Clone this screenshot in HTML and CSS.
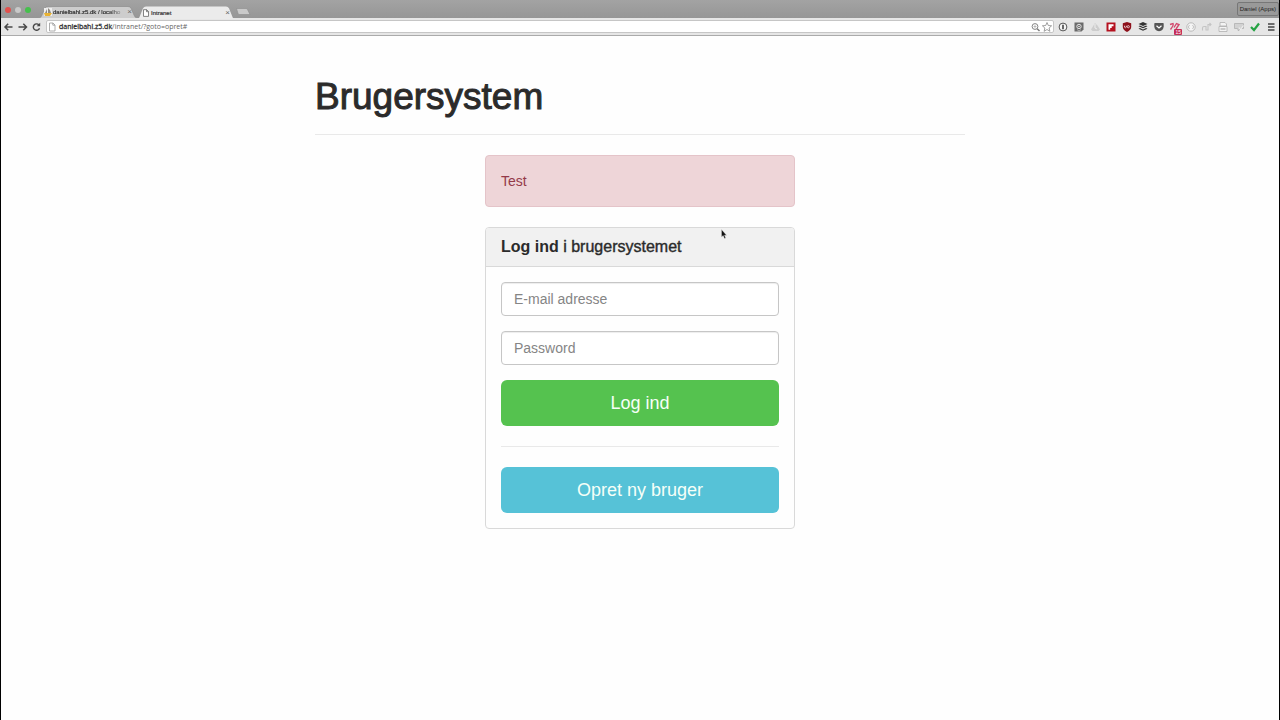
FILE: index.html
```html
<!DOCTYPE html>
<html lang="da">
<head>
  <meta charset="UTF-8">
  <meta name="viewport" content="width=device-width, initial-scale=1.0">
  <title>Intranet</title>
  <link rel="stylesheet" href="styles.css">
</head>
<body>
  <header class="browser">
    <div class="tabstrip">
      <div class="lights"><span class="light red"></span><span class="light grey"></span><span class="light green"></span></div>
      <div class="tab">
        <svg class="tab-shape" viewBox="0 0 98 12" preserveAspectRatio="none"><path d="M0 12Q2 12 3 9L6 2Q7 .5 9 .5H89Q91 .5 92 2L95 9Q96 12 98 12" fill="#cdcdcd" stroke="#8d8d8d" stroke-width=".7"/></svg>
        <svg class="fav" viewBox="0 0 8 8"><path d="M0 0H8V8H0Z" fill="#eee"/><path d="M1 5L3 1V5ZM4 5V0Q7 2 7 5Z" fill="#8f8a80"/><path d="M0 5H8L6 8H1Z" fill="#e8b232"/></svg>
        <span class="tab-title fade">danielbahl.z5.dk / localho</span>
        <button class="close" aria-label="Luk fane">×</button>
      </div>
      <div class="tab active">
        <svg class="tab-shape" viewBox="0 0 98 12" preserveAspectRatio="none"><path d="M0 12Q2 12 3 9L6 2Q7 .5 9 .5H89Q91 .5 92 2L95 9Q96 12 98 12" fill="#ebebeb"/></svg>
        <svg class="fav" viewBox="0 0 8 8"><path d="M1.500 .7H4.700L6.500 2.500V7.400H1.500ZM4.500 .7V2.700H6.500" fill="#fff" stroke="#666" stroke-width=".8"/></svg>
        <span class="tab-title">Intranet</span>
        <button class="close" aria-label="Luk fane">×</button>
      </div>
      <svg class="newtab" viewBox="0 0 16 7"><path d="M1.500 .5H11Q12 .5 12.500 1.500L15 6.500H4.500Q3.500 6.500 3 5.500Z" fill="#c9c9c9" stroke="#8b8b8b" stroke-width=".6"/></svg>
      <button class="profile">Daniel (Apps)</button>
    </div>
    <div class="toolbar">
      <svg class="nav" viewBox="0 0 14 12"><path d="M11.500 6H4.500M7.200 2.800L4 6L7.200 9.200" fill="none" stroke="#484848" stroke-width="1.500"/></svg>
      <svg class="nav" viewBox="0 0 14 12"><path d="M3.500 6H11M8.300 2.800L11.500 6L8.300 9.200" fill="none" stroke="#484848" stroke-width="1.500"/></svg>
      <svg class="nav" viewBox="0 0 14 12"><path d="M10 4A3.200 3.200 0 1 0 10.500 7.200" fill="none" stroke="#484848" stroke-width="1.400"/><path d="M11.200 1.800V5.300H7.700Z" fill="#484848"/></svg>
      <div class="omnibox">
        <svg class="page-icon" viewBox="0 0 10 12"><path d="M2.500 2H6L8 4V10H2.500ZM5.800 2V4.200H8" fill="#fff" stroke="#999" stroke-width=".8"/></svg>
        <span class="url"><b>danielbahl.z5.dk</b>/intranet/?goto=opret#</span>
        <svg class="inner" viewBox="0 0 12 12"><circle cx="6" cy="5.500" r="2.900" fill="none" stroke="#777" stroke-width=".9"/><path d="M4.500 5.500H7.500M6 4V7" stroke="#999" stroke-width=".6"/><path d="M8.200 7.700L10.500 10" stroke="#777" stroke-width="1.400"/></svg>
        <svg class="inner" viewBox="0 0 12 12"><path d="M6 1.500L7.300 4.500L10.600 4.800L8.100 7L8.900 10.300L6 8.500L3.100 10.300L3.900 7L1.400 4.800L4.700 4.500Z" fill="#fff" stroke="#888" stroke-width=".8"/></svg>
      </div>
      <div class="extensions">
        <svg viewBox="0 0 16 12"><circle cx="8" cy="6" r="3.900" fill="#f6f6f6" stroke="#555" stroke-width="1"/><path d="M8 3.800V8.200" stroke="#444" stroke-width="1.600"/></svg>
        <svg viewBox="0 0 16 12"><path d="M3.500 1.500H12.500V8.500L10.500 10.500H3.500Z" fill="#6b6b6b"/><circle cx="8" cy="5.500" r="2.200" fill="none" stroke="#eee" stroke-width=".9"/><circle cx="8" cy="5.500" r=".8" fill="#eee"/><path d="M6 8.500L8 10L10 8.500" fill="none" stroke="#ddd" stroke-width=".6"/></svg>
        <svg viewBox="0 0 16 12"><path d="M8 2L4 8.500L5.500 10H11.500L13 8.500L10.500 4.500Z" fill="#cdcdcd"/><path d="M8 3V7L10 8" fill="none" stroke="#eee" stroke-width="1"/></svg>
        <svg viewBox="0 0 16 12"><path d="M3.500 1.500H12.500V10.500H3.500Z" fill="#b51220"/><path d="M5.500 3.300H10.500V5.200H8.700V7H7.200V8.800H5.500Z" fill="#fff"/></svg>
        <svg viewBox="0 0 16 12"><path d="M8 1L12.200 2.300V6Q12 9 8 11Q4 9 3.800 6V2.300Z" fill="#8d101b"/><path d="M5.500 4.700V6.200Q6.400 7.300 7.300 6.200V4.700" fill="none" stroke="#fff" stroke-width=".7"/><circle cx="9.300" cy="5.700" r="1.100" fill="none" stroke="#fff" stroke-width=".7"/></svg>
        <svg viewBox="0 0 16 12"><path d="M8 1L12.500 3L8 5L3.500 3ZM3.500 5.200L5 4.600L8 6L11 4.600L12.500 5.200L8 7.300ZM3.500 7.700L5 7.100L8 8.500L11 7.100L12.500 7.700L8 9.800Z" fill="#333"/></svg>
        <svg viewBox="0 0 16 12"><path d="M4 2H12Q12.700 2 12.700 2.700V5.500Q12.500 9.700 8 10.300Q3.500 9.700 3.300 5.500V2.700Q3.300 2 4 2Z" fill="#555"/><path d="M5.500 4.700L8 7L10.500 4.700" fill="none" stroke="#fff" stroke-width="1.200"/></svg>
        <div class="badged">
          <svg viewBox="0 0 16 12"><path d="M3 3.500L6 2.500Q7 4 3.500 8.500M7 6.500L9.500 2.500L12 3.500L9 8" fill="none" stroke="#d3496d" stroke-width="1.400"/></svg>
          <span class="badge">15</span>
        </div>
        <svg viewBox="0 0 16 12"><circle cx="8" cy="6" r="4.200" fill="#f5f5f5" stroke="#b3b3b3" stroke-width=".9"/><path d="M6.500 4L5.300 6L6.500 8M9.500 4L10.700 6L9.500 8" fill="none" stroke="#bbb" stroke-width=".9"/></svg>
        <svg viewBox="0 0 16 12"><path d="M3.500 9.500V7Q3.500 5.500 5 5.500H7V9H9V3.500H12M10.500 2L12 3.500L10.500 5" fill="none" stroke="#c4c4c4" stroke-width="1.100"/></svg>
        <svg viewBox="0 0 16 12"><path d="M5 1.500H10L11.500 3V5H5ZM4 5.500H12V10.500H4Z" fill="#f4f4f4" stroke="#b0b0b0" stroke-width=".8"/><path d="M5.500 8H10.500" stroke="#aaa" stroke-width="1.200"/></svg>
        <svg viewBox="0 0 16 12"><path d="M3.500 2.500H12.500V7.500H9L7.500 10L6.500 7.500H3.500Z" fill="#d2d2d2" stroke="#b0b0b0" stroke-width=".8"/><path d="M8 6.500L9.500 8.500L12.500 4.500" fill="none" stroke="#eee" stroke-width="1.200"/></svg>
        <svg viewBox="0 0 16 12"><path d="M4 6L7 9L12 2.500" fill="none" stroke="#25a344" stroke-width="2.200"/></svg>
        <svg viewBox="0 0 16 12"><path d="M5 3H11.500M5 6H11.500M5 9H11.500" stroke="#444" stroke-width="1.500"/></svg>
      </div>
    </div>
  </header>

  <main class="container">
    <h1>Brugersystem</h1>
    <div class="login">
      <div class="alert">Test</div>
      <div class="panel">
        <h2 class="panel-heading"><b>Log ind</b> i brugersystemet</h2>
        <form class="panel-body">
          <input type="email" class="form-control" placeholder="E-mail adresse" aria-label="E-mail adresse">
          <input type="password" class="form-control" placeholder="Password" aria-label="Password">
          <button type="button" class="btn btn-success">Log ind</button>
          <hr>
          <button type="button" class="btn btn-info">Opret ny bruger</button>
        </form>
        <svg class="cursor" viewBox="0 0 6 10"><path d="M.5 .5V8L2.200 6.500L3.500 9.500L4.700 9L3.500 6.200H5.500Z" fill="#111" stroke="#ddd" stroke-width=".4"/></svg>
      </div>
    </div>
  </main>
</body>
</html>
```
FILE: styles.css
```css
* { box-sizing: border-box; }
body { margin: 0; min-height: 100vh; background: #fefefe; color: #2b2b2b;
       border: solid #000; border-width: 0 1px;
       font-family: "Liberation Sans", Arial, sans-serif; font-size: 14px; line-height: 20px; }
svg { display: block; flex: none; }
button { font-family: inherit; }

/* browser bar */
.browser { font-size: 7px; line-height: 10px; }
.tabstrip { display: flex; align-items: flex-end; height: 18px; padding-left: 4px;
            background: linear-gradient(#a3a3a3, #969696); }
.lights { display: flex; gap: 4px; width: 34px; height: 11px; }
.light { width: 6px; height: 6px; border-radius: 50%; }
.red { background: #e2504c; }
.grey { background: #c9c9c9; }
.green { background: #45c04c; }
.tab { position: relative; display: flex; align-items: center; width: 98px; height: 12px;
       padding: 0 5px; gap: 1px; color: #333; }
.tab.active { height: 13px; margin-bottom: -1px; }
.tab > * { position: relative; }
.tab .tab-shape { position: absolute; left: 0; top: 0; width: 100%; height: 100%; }
.fav { width: 8px; height: 8px; }
.tab-title { flex: 1; white-space: nowrap; font-size: 6px; -webkit-text-stroke: 0.2px #333; }
.fade { -webkit-mask-image: linear-gradient(90deg, #000 75%, transparent); }
.close { padding: 0; border: 0; background: none; color: #666; font-size: 8px; line-height: 8px; }
.newtab { width: 16px; height: 7px; margin-bottom: 3px; }
.profile { margin-left: auto; height: 14px; margin-bottom: 2px; padding: 0 2px; border: 1px solid #777;
           border-radius: 2px; background: #999; color: #222; font-size: 6px; line-height: 10px; }
.toolbar { display: flex; align-items: center; height: 18px;
           background: #e6e6e6; border-bottom: 1px solid #ababab; }
.nav { width: 14px; height: 12px; }
.omnibox { display: flex; align-items: center; flex: 1; height: 13px; margin-left: 3px; margin-right: 1px;
           background: #fff; border: 1px solid #c6c6c6; border-radius: 2px; }
.page-icon { width: 10px; height: 12px; margin-right: 2px; }
.url { flex: 1; color: #666; font-family: "Open Sans", sans-serif; }
.url b { color: #333; font-weight: normal; -webkit-text-stroke: 0.3px #333; }
.inner { width: 12px; height: 12px; }
.extensions { display: flex; }
.extensions svg { width: 16px; height: 12px; }
.badged { position: relative; }
.badge { position: absolute; right: 1px; bottom: -2px; padding: 0 1px; border-radius: 1px;
         background: #c52c58; color: #fff; font-size: 5px; line-height: 6px; }

/* page */
.container { max-width: 650px; margin: 0 auto; }
h1 { margin: 39px 0 20px; padding-bottom: 15px; border-bottom: 1px solid #e9e9e9;
     font-size: 37px; line-height: 44px; font-weight: normal; -webkit-text-stroke: 1px #2b2b2b; }
.login { max-width: 310px; margin: 0 auto; }
.alert { padding: 15px; margin-bottom: 20px; border: 1px solid #e4c4c9; border-radius: 4px;
         background: #eed5d8; color: #943a48; }
.panel { position: relative; border: 1px solid #d9d9d9; border-radius: 4px; background: #fefefe; }
.panel-heading { margin: 0; padding: 9px 15px; border-bottom: 1px solid #d9d9d9;
                 border-radius: 3px 3px 0 0; background: #f1f1f1; font-size: 16px; line-height: 20px;
                 font-weight: normal; -webkit-text-stroke: 0.4px #2b2b2b; }
.panel-heading b { -webkit-text-stroke: 0; }
.panel-body { padding: 15px; }
.form-control { display: block; width: 100%; height: 34px; margin-bottom: 15px; padding: 6px 12px;
                border: 1px solid #c6c6c6; border-radius: 4px; background: #fff;
                box-shadow: inset 0 1px 1px rgba(0, 0, 0, .075); font: inherit; }
.form-control::placeholder { color: #858585; }
.btn { display: block; width: 100%; height: 46px; padding: 0; border: 0; border-radius: 6px;
       color: #f5fff8; font-size: 18px; line-height: 24px; }
.btn-success { background: #55c24f; }
.btn-info { background: #56c2d7; }
hr { margin: 20px 0; border: 0; border-top: 1px solid #e9e9e9; }
.cursor { position: absolute; left: 235px; top: 1px; width: 6px; height: 10px; }
```
